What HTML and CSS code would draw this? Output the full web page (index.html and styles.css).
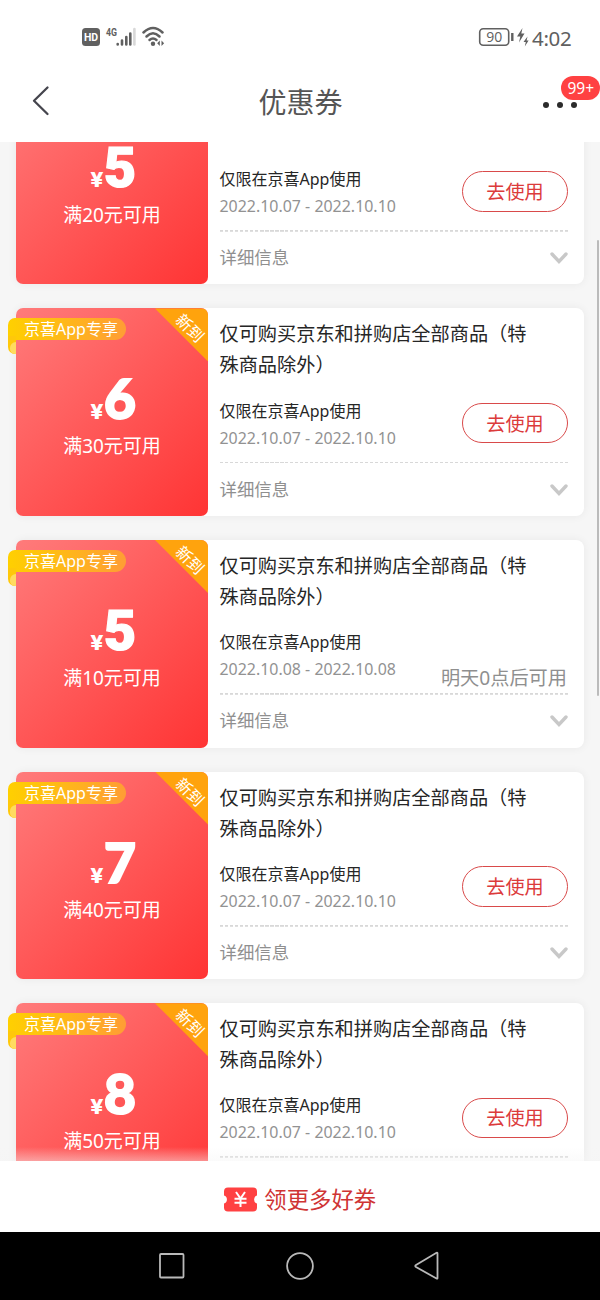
FILE: index.html
```html
<!DOCTYPE html>
<html lang="zh-CN">
<head>
<meta charset="utf-8">
<title>优惠券</title>
<link rel="stylesheet" href="styles.css">
</head>
<body>
<div class="screen">
  <div class="status">
    <svg class="signal" width="86" height="24" viewBox="0 0 86 24">
      <rect x="1" y="3" width="18" height="18" rx="3.5" fill="#606060"/>
      <text x="10" y="16" class="hd" text-anchor="middle">HD</text>
      <text x="25" y="11" class="net" textLength="11" lengthAdjust="spacingAndGlyphs">4G</text>
      <g stroke-width="2.6" stroke-linecap="round" stroke="#606060">
        <path d="M36.700 19v.5M41 15.500v4M45.300 12v7.500M49.300 8.500v11"/>
      </g>
      <path d="M53.400 4v15.500" stroke="#d8d8d8" stroke-width="2.600" stroke-linecap="round"/>
      <g fill="none" stroke="#606060" stroke-width="2.500" stroke-linecap="round">
        <path d="M62.500 7.500Q72-1.500 81.500 7.500"/><path d="M65.500 11.500Q72 5 78.500 11.500"/><path d="M68.500 15Q72 12 75.500 15"/>
      </g>
      <circle cx="72" cy="18.800" r="2.200" fill="#606060"/>
      <path d="M78.800 15.500v5.500l-2.600-2.800zM80.500 15.500v5.500l2.600-2.800z" fill="#606060"/>
    </svg>
    <div class="power">
      <svg width="52" height="22" viewBox="0 0 52 22">
        <rect x="1.700" y="2.700" width="29" height="16.600" rx="3.500" fill="none" stroke="#606060" stroke-width="1.600"/>
        <text x="16.200" y="16.200" class="charge" text-anchor="middle">90</text>
        <path d="M34.300 7v8" stroke="#606060" stroke-width="2.400"/>
        <path d="M44.500 2l-5.500 8.500h3.300l-1.300 6 5.500-9h-3.200zM49.500 10.500l-4 5.500h2.300l-1 4.500 3.800-6h-2z" fill="#606060"/>
      </svg>
      <span class="clock">4:02</span>
    </div>
  </div>
  <header class="header">
    <svg class="back" width="18" height="32" viewBox="0 0 18 32"><path d="M15.500 2.500L2 15.800l13.500 13.200" fill="none" stroke="#45454d" stroke-width="2.300" stroke-linecap="round" stroke-linejoin="round"/></svg>
    <h1 class="heading">优惠券</h1>
    <div class="more"><i></i><i></i><i></i><span class="badge">99+</span></div>
  </header>
  <main class="scroll">
    <div class="list" id="list"></div>
    <div class="scrollbar"></div>
  </main>
  <footer class="claim">
    <svg width="33" height="25" viewBox="0 0 33 25">
      <path d="M4 .5h25a4 4 0 0 1 4 4V8.500a4.200 4.200 0 0 0 0 8v4a4 4 0 0 1-4 4H4a4 4 0 0 1-4-4v-4a4.200 4.200 0 0 0 0-8V4.500a4 4 0 0 1 4-4z" fill="#ff4142"/>
      <path d="M12 5l4.500 6.500L21 5M10.500 11.800h12M10.500 15.800h12M16.500 11v9" fill="none" stroke="#fff" stroke-width="2"/>
    </svg>
    <span>领更多好券</span>
  </footer>
  <nav class="nav">
    <svg width="28" height="30" viewBox="0 0 28 30"><rect x="2" y="3" width="23.500" height="23.500" rx="1" /></svg>
    <svg width="28" height="30" viewBox="0 0 28 30"><circle cx="14" cy="15" r="12.900"/></svg>
    <svg width="28" height="30" viewBox="0 0 28 30"><path d="M24.500 2.500v24.500q0 1-1 .5L3 16q-1.500-1 0-2L23.500 1.800q1-.4 1 .7z"/></svg>
  </nav>
</div>
<template id="coupon">
  <article class="card">
    <div class="value">
      <div class="corner"><span>新到</span></div>
      <div class="ribbon">京喜App专享</div>
      <div class="amount"><span class="yen">¥</span><b class="number"></b></div>
      <div class="limit"></div>
    </div>
    <div class="body">
      <div class="top">
        <h2 class="title">仅可购买京东和拼购店全部商品（特殊商品除外）</h2>
        <div class="usage">
          <div><p class="scope">仅限在京喜App使用</p><p class="date"></p></div>
          <button class="use">去使用</button>
        </div>
      </div>
      <div class="detail"><span>详细信息</span>
        <svg width="18" height="12" viewBox="0 0 18 12"><path d="M2 2l7 7.500L16 2" fill="none" stroke="#c8c8c8" stroke-width="3.400" stroke-linecap="round"/></svg>
      </div>
    </div>
  </article>
</template>
<script src="app.js"></script>
</body>
</html>
```

FILE: styles.css
```css
* { box-sizing: border-box; margin: 0; padding: 0; }
body { background: #fff; font-family: "Noto Sans", "Noto Sans CJK SC", sans-serif; color: #262626; }
.screen { width: 600px; height: 1300px; display: flex; flex-direction: column; overflow: hidden; }

.status { height: 62px; flex: none; display: flex; justify-content: space-between; padding: 25px 27px 0 81px; }
.power { display: flex; padding-top: 1px; gap: 2.500px; color: #606060; }
.power svg { margin-left: -1px; }
.clock { font: 400 20.500px/24px "Noto Sans", sans-serif; letter-spacing: -.3px; width: 41px; }
.hd { font: 700 10.500px Roboto, sans-serif; fill: #fff; }
.net { font: 700 11px Roboto, sans-serif; fill: #606060; }
.charge { font: 400 14px "Open Sans", sans-serif; fill: #606060; }

.header { height: 80px; flex: none; display: flex; justify-content: space-between; align-items: flex-start; padding: 23px 22px 0 32px; }
.heading { font-size: 28px; line-height: 34px; font-weight: 400; color: #555; margin-left: 8px; }
.more { position: relative; display: flex; gap: 8px; width: 35px; padding-top: 17px; }
.more i { width: 6px; height: 6px; border-radius: 50%; background: #2b2b2b; flex: none; }
.badge { position: absolute; left: 18.500px; top: -9px; width: 38.500px; height: 23.500px; border-radius: 12px; background: #ff4142; color: #fff; font-size: 15.500px; line-height: 24.500px; text-align: center; }

.scroll { position: relative; height: 1019px; flex: none; overflow: hidden; background: #f6f6f6; }
.scroll::after { content: ""; position: absolute; left: 0; right: 0; bottom: 0; height: 14px; background: linear-gradient(rgba(245,245,245,0), rgba(245,245,245,.45)); }
.list { display: flex; flex-direction: column; gap: 24px; padding: 0 16px; margin-top: -65.200px; }
.scrollbar { position: absolute; right: 1px; top: 98px; width: 2.500px; height: 456px; border-radius: 2px; background: #bbb; }

.card { display: flex; flex: none; height: 207.600px; border-radius: 8px; background: #fff; box-shadow: 0 0 10px rgba(0,0,0,.06); }
.value { position: relative; width: 192px; display: flex; flex-direction: column; align-items: center; border-radius: 7px; background: linear-gradient(135deg, #ff7b7b, #ff3434); color: #fff; padding-top: 62px; }
.amount { display: flex; align-items: baseline; height: 56px; line-height: 56px; gap: 2px; padding-left: 2px; margin-bottom: 6px; }
.yen { font: 800 20.500px/56px Inter, sans-serif; transform: scaleX(1.120); }
.number { font: 900 55px/56px Lato, sans-serif; width: 31px; text-align: center; display: flex; justify-content: center; -webkit-text-stroke: 2px #fff; }
.number.grotesk { font-family: Roboto, sans-serif; font-size: 56px; -webkit-text-stroke-width: 1.200px; padding-top: 1px; }
.limit { font-size: 19px; line-height: 28px; }
.corner { position: absolute; right: 0; top: 0; width: 53px; height: 53px; background: #ffa30d; clip-path: polygon(0 0, 100% 0, 100% 100%); border-top-right-radius: 7px; }
.corner span { position: absolute; left: 14.500px; top: 8px; width: 40px; line-height: 24px; text-align: center; font-size: 16px; transform: rotate(45deg); }
.ribbon { position: absolute; left: -8px; top: 10px; width: 118px; height: 22px; padding-left: 16px; font-size: 16px; line-height: 22px; white-space: nowrap; border-radius: 7px 11px 11px 0; background: linear-gradient(90deg, #ffd000, #ff9d35); }
.ribbon::before { content: ""; position: absolute; left: 0; top: 18px; width: 8px; height: 18px; border-radius: 0 0 0 7px; background: #ffc80a; }
.ribbon::after { content: ""; position: absolute; left: 1.500px; top: 23.500px; width: 6.500px; height: 12.500px; border-radius: 6px 0 0 5px; background: #ffdb60; }
.body { flex: 1; display: flex; flex-direction: column; padding: 0 16px 0 11.500px; }
.top { height: 155px; padding-top: 10px; border-bottom: 2px solid transparent; background: repeating-linear-gradient(90deg, #d8d8d8 0 3.500px, transparent 3.500px 5px) left bottom / 100% 1.800px no-repeat border-box; }
.title { width: 310px; font-size: 19.200px; line-height: 31px; font-weight: 400; }
.seen .title { transform: translateY(-2.500px); }
.usage { display: flex; justify-content: space-between; align-items: flex-start; margin-top: 17.200px; }
.scope { font-size: 16px; line-height: 27px; }
.date { font-size: 15.950px; line-height: 27px; color: #929292; }
.use { width: 106px; height: 40.500px; margin-top: 5.300px; border: 1.400px solid #d94a4a; border-radius: 21px; background: #fff; color: #dc3b3b; font: 400 19.200px/37px "Noto Sans CJK SC", sans-serif; }
.later { font-size: 19.200px; line-height: 28px; color: #8f8f8f; margin: 34.500px 1px 0 0; }
.detail { flex: 1; display: flex; justify-content: space-between; align-items: center; font-size: 17.400px; color: #8f8f8f; }
.detail span { margin-top: -3px; }

.claim { height: 71px; flex: none; display: flex; align-items: center; justify-content: center; gap: 7.500px; padding: 5px 0 0 0; background: #fff; color: #cf3434; font-size: 22.400px; line-height: 30px; }
.claim span { padding-top: 1px; }
.nav { height: 68px; flex: none; display: flex; align-items: center; justify-content: space-between; padding: 0 159px 0 158px; background: #000; }
.nav svg { fill: none; stroke: #b9b9b9; stroke-width: 1.800; }
```

FILE: app.js
```js
const coupons = [
  { value: 5, min: 20, from: '2022.10.07', to: '2022.10.10', seen: true },
  { value: 6, min: 30, from: '2022.10.07', to: '2022.10.10' },
  { value: 5, min: 10, from: '2022.10.08', to: '2022.10.08', later: '明天0点后可用' },
  { value: 7, min: 40, from: '2022.10.07', to: '2022.10.10' },
  { value: 8, min: 50, from: '2022.10.07', to: '2022.10.10' }
];
const list = document.getElementById('list');
const template = document.getElementById('coupon');
coupons.forEach(c => {
  const card = template.content.cloneNode(true);
  const find = s => card.querySelector(s);
  find('.number').textContent = c.value;
  if (c.value === 5) find('.number').classList.add('grotesk');
  find('.limit').textContent = `满${c.min}元可用`;
  find('.date').textContent = `${c.from} - ${c.to}`;
  if (c.seen) {
    find('.card').classList.add('seen');
    find('.corner').remove();
    find('.ribbon').remove();
  }
  if (c.later) {
    const label = document.createElement('span');
    label.className = 'later';
    label.textContent = c.later;
    find('.use').replaceWith(label);
  }
  list.append(card);
});
```
